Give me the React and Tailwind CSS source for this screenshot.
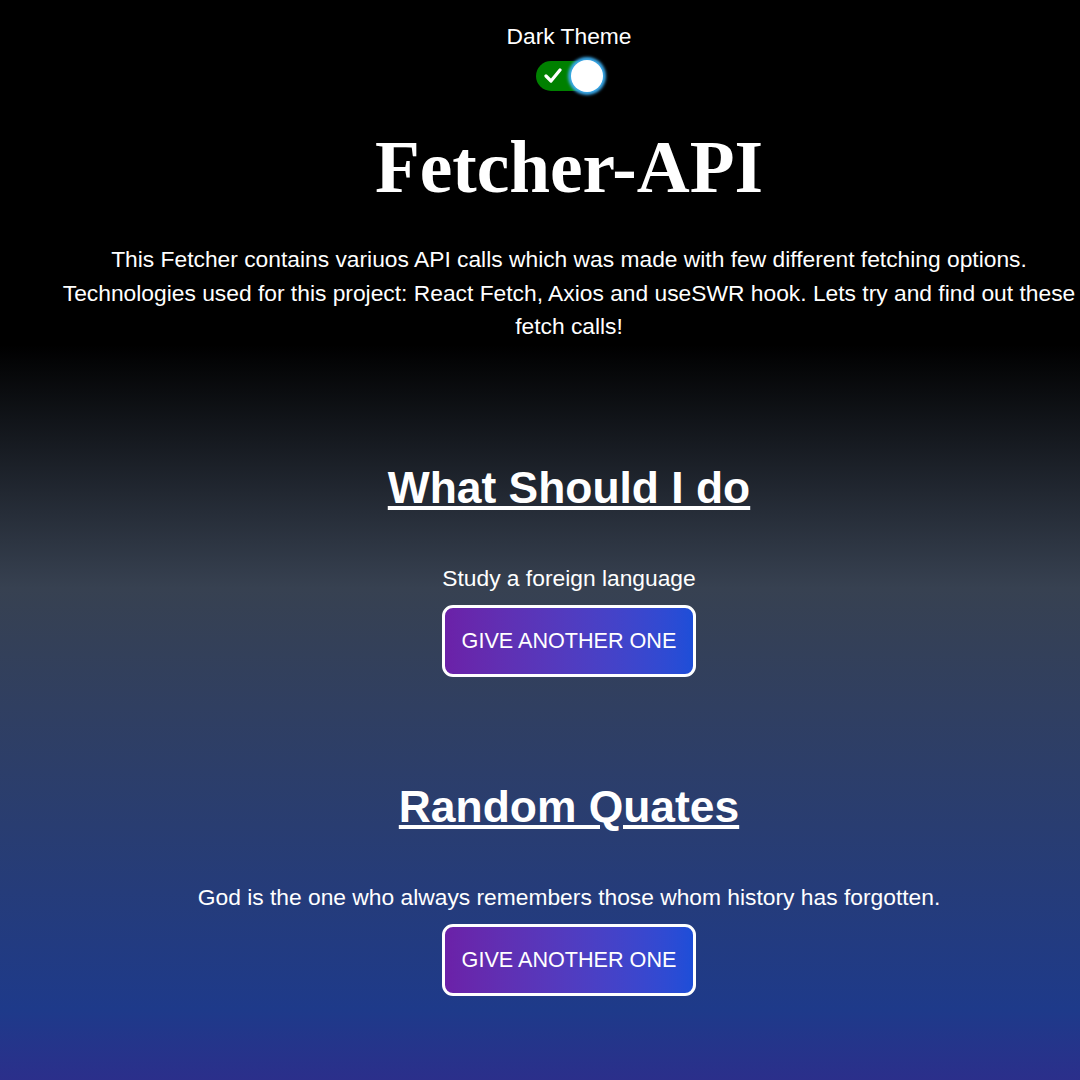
import React from "react";

function Toggle() {
  return (
    <div className="relative mt-[12px] h-[30px] w-[66px]">
      <div className="absolute inset-0 rounded-full bg-[#008000]" />
      <svg
        className="absolute left-[8px] top-[6px]"
        width="18"
        height="17"
        viewBox="0 0 18 17"
        fill="none"
      >
        <path d="M2 9 L7 14 L16 3" stroke="white" strokeWidth="3.2" strokeLinecap="round" strokeLinejoin="round" />
      </svg>
      <div className="absolute right-[-1px] top-[-1px] h-[32px] w-[32px] rounded-full bg-white shadow-[0_0_3px_3px_#3aa9ea]" />
    </div>
  );
}

function Section({ title, text, titleMt }) {
  return (
    <div className={`flex flex-col items-center ${titleMt}`}>
      <h2 className="text-[44.4px] font-bold leading-[50px] underline text-white">{title}</h2>
      <p className="mt-[52px] text-[22.8px] leading-[26px] text-white">{text}</p>
      <button className="mt-[14px] rounded-[11px] border-[3px] border-white bg-gradient-to-r from-[#6b21a8] to-[#1d4ed8] px-[17px] py-[20.5px] text-[21.6px] leading-[25px] text-white">
        GIVE ANOTHER ONE
      </button>
    </div>
  );
}

export default function App() {
  return (
    <div
      className="h-[1080px] w-full overflow-hidden bg-[linear-gradient(to_bottom,#000_0px,#000_345px,#374151_588px,#1e3a8a_1010px,#2b2f8b_1080px)] text-white"
      style={{ fontFamily: '"Liberation Sans", Arial, sans-serif' }}
    >
      <div className="flex w-[1138px] flex-col items-center pt-[23px]">
        <div className="text-[22.8px] leading-[26px]">Dark Theme</div>
        <Toggle />
        <h1
          className="mt-[37px] text-[73.3px] font-bold leading-[80px]"
          style={{ fontFamily: '"Liberation Serif", "Times New Roman", serif' }}
        >
          Fetcher-API
        </h1>
        <p className="mt-[35px] max-w-[1040px] text-center text-[22.8px] leading-[33.5px]">
          This Fetcher contains variuos API calls which was made with few different fetching options.
          Technologies used for this project: React Fetch, Axios and useSWR hook. Lets try and find out
          these fetch calls!
        </p>
        <Section title="What Should I do" text="Study a foreign language" titleMt="mt-[119px]" />
        <Section
          title="Random Quates"
          text="God is the one who always remembers those whom history has forgotten."
          titleMt="mt-[105px]"
        />
      </div>
    </div>
  );
}
